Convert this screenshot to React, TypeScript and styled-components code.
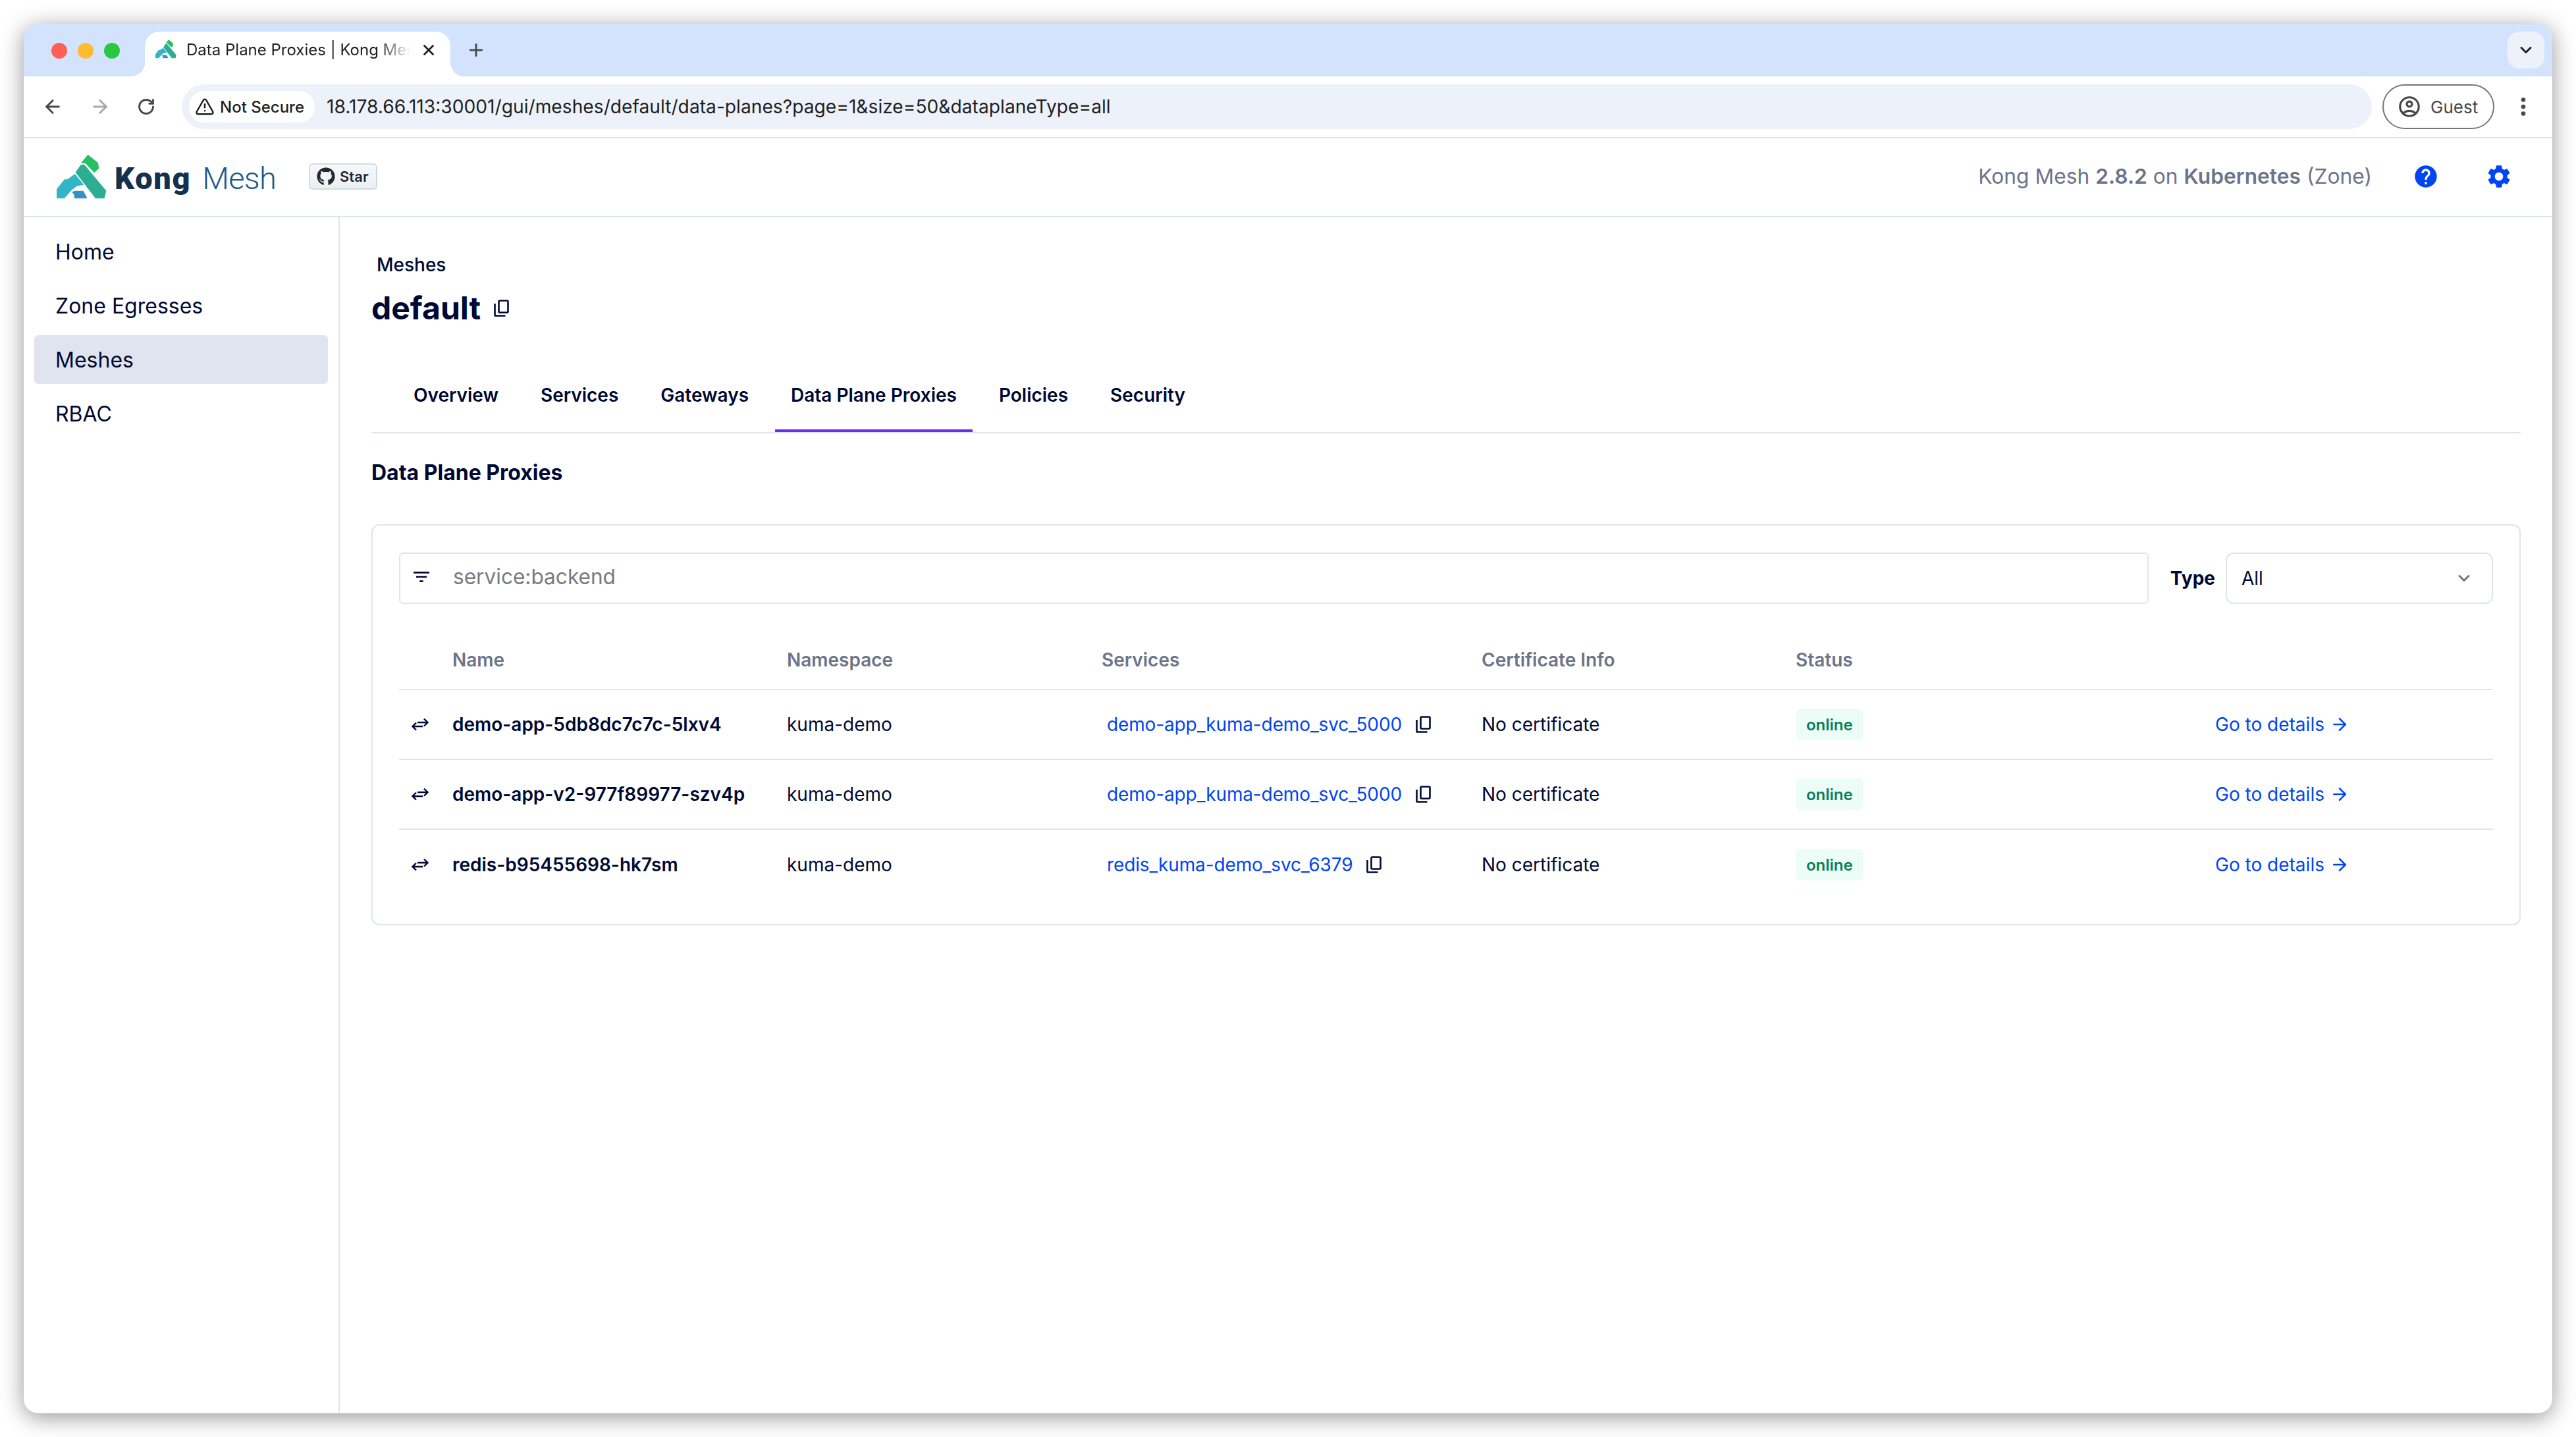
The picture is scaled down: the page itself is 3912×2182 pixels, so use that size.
import React from "react"
import styled, { createGlobalStyle } from "styled-components"
import { ArrowLeft, ArrowRight, ChevronDown, EllipsisVertical, Plus, RotateCw, TriangleAlert, X } from "lucide-react"
import { FaGithub } from "react-icons/fa"
import { MdFilterList, MdHelp, MdOutlineAccountCircle, MdSettings } from "react-icons/md"

const INK = "#000933"
const MUTED = "#6c7489"
const LINK = "#0044f4"
const LINE = "#e0e4ec"

const GlobalStyle = createGlobalStyle`
    html, body {
        margin: 0;
        background: #ffffff;
        font-family: Inter, "Liberation Sans", sans-serif;
        color: ${INK};
    }
    * {
        box-sizing: border-box;
    }
`

const Logo = ({ size }: { size: number }) => (
    <svg width={size} height={(size * 68) / 76} viewBox="0 0 76 68">
        <path fill="#28bf63" d="M37 13.5 47.5 .7 63 13.3l1.3 8.4-7.2 6.6-13.2-14z" />
        <path fill="#2bae93" d="M28.6 27.7 36.8 16h5.3l33.3 39.7-2.9 11.6H59z" />
        <path fill="#31b6c8" d="M0 53.3 11.8 38.3h4.6L27.9 30l13.5 16.7-10 1.6-8.9 6.7-10.7 12.3H0z" />
        <path fill="#3592c4" d="m23.2 57.3 4.7-1.6h12.5l5.3 9.3v2.3H26.8v-5z" />
    </svg>
)

const CopyIcon = () => (
    <CopyGlyph width="23" height="26" viewBox="0 0 23 26" fill="none" stroke={INK} strokeWidth="2.6">
        <rect x="7.5" y="1.5" width="14" height="18" rx="1.5" />
        <path d="M1.5 6v17.2c0 .7.6 1.3 1.3 1.3h14.7" />
    </CopyGlyph>
)

const SwapIcon = () => (
    <svg width="26" height="20" viewBox="0 0 26 20" fill="none" stroke={INK} strokeWidth="2.4">
        <path d="M9 7h15.5M19 1.5 24.5 7 19 12.5" />
        <path d="M17 13H1.8M7 7.5 1.5 13 7 18.5" />
    </svg>
)

const rows = [
    { name: "demo-app-5db8dc7c7c-5lxv4", service: "demo-app_kuma-demo_svc_5000" },
    { name: "demo-app-v2-977f89977-szv4p", service: "demo-app_kuma-demo_svc_5000" },
    { name: "redis-b95455698-hk7sm", service: "redis_kuma-demo_svc_6379" },
]

const tabs = ["Overview", "Services", "Gateways", "Data Plane Proxies", "Policies", "Security"]
const menu = ["Home", "Zone Egresses", "Meshes", "RBAC"]

export default function App() {
    return (
        <Page>
            <GlobalStyle />
            <BrowserWindow>
                <TabStrip>
                    <TrafficLights>
                        <Light $color="#ff5f57" />
                        <Light $color="#febc2e" />
                        <Light $color="#28c840" />
                    </TrafficLights>
                    <BrowserTab>
                        <Logo size={32} />
                        <TabTitle>Data Plane Proxies | Kong Mesh</TabTitle>
                        <X size={26} strokeWidth={2.6} color="#1f1f1f" />
                    </BrowserTab>
                    <NewTab>
                        <Plus size={30} strokeWidth={2.2} color="#444746" />
                    </NewTab>
                    <TabSearch>
                        <ChevronDown size={28} strokeWidth={2.6} color="#1f1f1f" />
                    </TabSearch>
                </TabStrip>
                <Toolbar>
                    <NavIcons>
                        <ArrowLeft size={32} strokeWidth={2.2} color="#474747" />
                        <ArrowRight size={32} strokeWidth={2.2} color="#a8a8a8" />
                        <RotateCw size={28} strokeWidth={2.4} color="#474747" />
                    </NavIcons>
                    <AddressBar>
                        <SecurityChip>
                            <TriangleAlert size={30} strokeWidth={2} color="#1f1f1f" />
                            Not Secure
                        </SecurityChip>
                        <Url>18.178.66.113:30001/gui/meshes/default/data-planes?page=1&amp;size=50&amp;dataplaneType=all</Url>
                    </AddressBar>
                    <GuestButton>
                        <MdOutlineAccountCircle size={38} color="#474747" />
                        Guest
                    </GuestButton>
                    <EllipsisVertical size={36} strokeWidth={2.4} color="#474747" />
                </Toolbar>
                <AppHeader>
                    <Logo size={76} />
                    <Brand>
                        <BrandBold>Kong</BrandBold>
                        <BrandLight>Mesh</BrandLight>
                    </Brand>
                    <StarButton>
                        <FaGithub size={28} color="#24292f" />
                        Star
                    </StarButton>
                    <HeaderSpacer />
                    <Version>
                        Kong Mesh <b>2.8.2</b> on <b>Kubernetes</b> (Zone)
                    </Version>
                    <HeaderIcons>
                        <MdHelp size={40} color={LINK} />
                        <MdSettings size={42} color={LINK} />
                    </HeaderIcons>
                </AppHeader>
                <Body>
                    <Sidebar>
                        {menu.map((item) => (
                            <MenuItem key={item} $active={item === "Meshes"}>
                                {item}
                            </MenuItem>
                        ))}
                    </Sidebar>
                    <Main>
                        <Breadcrumb>Meshes</Breadcrumb>
                        <Title>
                            default
                            <CopyIcon />
                        </Title>
                        <Tabs>
                            {tabs.map((tab) => (
                                <Tab key={tab} $active={tab === "Data Plane Proxies"}>
                                    {tab}
                                </Tab>
                            ))}
                        </Tabs>
                        <SectionTitle>Data Plane Proxies</SectionTitle>
                        <Card>
                            <FilterRow>
                                <FilterField>
                                    <MdFilterList size={32} color={INK} />
                                    <FilterInput placeholder="service:backend" readOnly />
                                </FilterField>
                                <TypeLabel>Type</TypeLabel>
                                <TypeSelect>
                                    All
                                    <ChevronDown size={28} strokeWidth={2.6} color={MUTED} />
                                </TypeSelect>
                            </FilterRow>
                            <TableHead>
                                <span />
                                <span>Name</span>
                                <span>Namespace</span>
                                <span>Services</span>
                                <span>Certificate Info</span>
                                <span>Status</span>
                                <span />
                            </TableHead>
                            {rows.map((row) => (
                                <TableRow key={row.name}>
                                    <SwapIcon />
                                    <NameCell>{row.name}</NameCell>
                                    <span>kuma-demo</span>
                                    <ServiceCell>
                                        <ServiceLink>{row.service}</ServiceLink>
                                        <CopyIcon />
                                    </ServiceCell>
                                    <span>No certificate</span>
                                    <span>
                                        <Badge>online</Badge>
                                    </span>
                                    <DetailsLink>
                                        Go to details
                                        <ArrowRight size={30} strokeWidth={2} />
                                    </DetailsLink>
                                </TableRow>
                            ))}
                        </Card>
                    </Main>
                </Body>
            </BrowserWindow>
        </Page>
    )
}

const Page = styled.div`
    display: flex;
    width: 3912px;
    height: 2182px;
    padding: 36px;
    overflow: hidden;
`

const BrowserWindow = styled.div`
    display: flex;
    flex-direction: column;
    flex: 1;
    background: #ffffff;
    border-radius: 22px;
    overflow: hidden;
    box-shadow: 0 6px 34px rgba(0, 0, 0, 0.42);
`

const TabStrip = styled.div`
    display: flex;
    align-items: flex-end;
    flex-shrink: 0;
    height: 80px;
    padding-right: 12px;
    background: #d3e3fd;
`

const TrafficLights = styled.div`
    display: flex;
    align-self: flex-start;
    gap: 16px;
    width: 184px;
    padding: 29px 0 0 42px;
`

const Light = styled.div<{ $color: string }>`
    width: 24px;
    height: 24px;
    border-radius: 50%;
    background: ${({ $color }) => $color};
`

const BrowserTab = styled.div`
    position: relative;
    display: flex;
    align-items: flex-start;
    width: 464px;
    height: 68px;
    padding: 12px 20px 0 16px;
    gap: 15px;
    background: #ffffff;
    border-radius: 22px 22px 0 0;

    &::before,
    &::after {
        content: "";
        position: absolute;
        bottom: 0;
        width: 22px;
        height: 22px;
    }
    &::before {
        left: -22px;
        background: radial-gradient(circle at 0 0, transparent 22px, #ffffff 22.5px);
    }
    &::after {
        right: -22px;
        background: radial-gradient(circle at 100% 0, transparent 22px, #ffffff 22.5px);
    }

    > svg:last-child {
        margin-top: 3px;
    }
`

const TabTitle = styled.div`
    flex: 1;
    overflow: hidden;
    font-size: 24px;
    line-height: 32px;
    white-space: nowrap;
    color: #1f1f1f;
    -webkit-mask-image: linear-gradient(to right, #000 85%, transparent 100%);
    mask-image: linear-gradient(to right, #000 85%, transparent 100%);
`

const NewTab = styled.div`
    display: flex;
    align-self: flex-start;
    margin: 25px 0 0 24px;
`

const TabSearch = styled.div`
    display: flex;
    align-items: center;
    justify-content: center;
    align-self: flex-start;
    width: 56px;
    height: 56px;
    margin: 12px 0 0 auto;
    border-radius: 18px;
    background: #edf2fa;
`

const Toolbar = styled.div`
    display: flex;
    align-items: center;
    flex-shrink: 0;
    height: 94px;
    padding: 0 26px 0 0;
    background: #ffffff;
    border-bottom: 2px solid #e2e2e2;
    border-radius: 22px 22px 0 0;
`

const NavIcons = styled.div`
    display: flex;
    align-items: center;
    gap: 40px;
    padding-left: 28px;
    width: 240px;
`

const AddressBar = styled.div`
    display: flex;
    align-items: center;
    flex: 1;
    height: 68px;
    padding-left: 11px;
    border-radius: 34px;
    background: #edf2fa;
`

const SecurityChip = styled.div`
    display: flex;
    align-items: center;
    gap: 8px;
    height: 48px;
    padding: 0 16px 0 9px;
    border-radius: 24px;
    background: #ffffff;
    font-size: 24px;
    font-weight: 500;
    color: #1f1f1f;
`

const Url = styled.div`
    margin-left: 18px;
    font-size: 28.2px;
    color: #1f1f1f;
`

const GuestButton = styled.div`
    display: flex;
    align-items: center;
    gap: 13px;
    width: 170px;
    height: 68px;
    margin: 0 26px 0 16px;
    padding-left: 20px;
    border: 2px solid #747775;
    border-radius: 34px;
    font-size: 26px;
    color: #444746;
`

const AppHeader = styled.header`
    display: flex;
    align-items: center;
    flex-shrink: 0;
    height: 120px;
    padding: 0 60px 3px 50px;
    border-bottom: 2px solid ${LINE};
`

const Brand = styled.div`
    display: flex;
    gap: 17px;
    margin: 5px 0 0 12px;
    font-family: Roboto, "Liberation Sans", sans-serif;
    font-size: 47px;
`

const BrandBold = styled.span`
    font-weight: 900;
    letter-spacing: 1.7px;
    color: #14304f;
`

const BrandLight = styled.span`
    font-weight: 300;
    letter-spacing: -0.7px;
    color: #1d5a8a;
`

const StarButton = styled.div`
    display: flex;
    align-items: center;
    gap: 7px;
    width: 104px;
    height: 40px;
    margin-left: 50px;
    padding: 0 10px;
    border: 2px solid #d5dae1;
    border-radius: 6px;
    background: linear-gradient(#f6f8fa, #ebf0f4);
    font-size: 22px;
    font-weight: 600;
    color: #24292f;
`

const HeaderSpacer = styled.div`
    flex: 1;
`

const Version = styled.div`
    font-size: 31.75px;
    color: ${MUTED};

    b {
        font-weight: 600;
    }
`

const HeaderIcons = styled.div`
    display: flex;
    align-items: center;
    gap: 70px;
    margin-left: 62px;
`

const Body = styled.div`
    display: flex;
    flex: 1;
    min-height: 0;
`

const Sidebar = styled.nav`
    display: flex;
    flex-direction: column;
    gap: 8px;
    width: 480px;
    flex-shrink: 0;
    padding: 15px 16px 0 16px;
    border-right: 2px solid ${LINE};
`

const MenuItem = styled.div<{ $active: boolean }>`
    display: flex;
    align-items: center;
    height: 74px;
    padding-left: 32px;
    border-radius: 6px;
    font-size: 32px;
    color: ${INK};
    background: ${({ $active }) => ($active ? "#e0e4ee" : "transparent")};
`

const Main = styled.main`
    flex: 1;
    min-width: 0;
    padding: 54px 48px 0 48px;
`

const Breadcrumb = styled.div`
    margin-left: 8px;
    font-size: 28px;
    line-height: 36px;
    font-weight: 500;
`

const Title = styled.h1`
    display: flex;
    align-items: center;
    gap: 20px;
    margin: 18px 0 0;
    font-size: 48px;
    line-height: 60px;
    font-weight: 700;
`

const CopyGlyph = styled.svg`
    flex-shrink: 0;
`

const Tabs = styled.div`
    display: flex;
    gap: 16px;
    margin-top: 50px;
    padding-left: 40px;
    border-bottom: 2px solid ${LINE};
`

const Tab = styled.div<{ $active: boolean }>`
    display: flex;
    align-items: center;
    height: 108px;
    padding: 0 24px;
    font-size: 28px;
    font-weight: 600;
    border-bottom: 4px solid ${({ $active }) => ($active ? "#6c2df0" : "transparent")};
`

const SectionTitle = styled.h2`
    margin: 40px 0 0;
    font-size: 32px;
    line-height: 40px;
    font-weight: 700;
`

const Card = styled.section`
    margin-top: 58px;
    padding: 41px 40px 37px 40px;
    border: 2px solid ${LINE};
    border-radius: 12px;
`

const FilterRow = styled.div`
    display: flex;
    align-items: center;
    height: 78px;
`

const FilterField = styled.div`
    display: flex;
    align-items: center;
    flex: 1;
    height: 100%;
    padding: 0 0 4px 16px;
    gap: 32px;
    border: 2px solid ${LINE};
    border-radius: 6px;
`

const FilterInput = styled.input`
    flex: 1;
    border: 0;
    outline: 0;
    padding: 0;
    margin-bottom: 2px;
    font: 31.6px Inter, "Liberation Sans", sans-serif;

    &::placeholder {
        color: #777c80;
        opacity: 1;
    }
`

const TypeLabel = styled.div`
    margin: 0 16px 0 33px;
    font-size: 28px;
    font-weight: 700;
`

const TypeSelect = styled.div`
    display: flex;
    align-items: center;
    justify-content: space-between;
    width: 406px;
    height: 100%;
    padding: 0 28px 0 22px;
    border: 2px solid ${LINE};
    border-radius: 12px;
    font-size: 28px;
`

const COLUMNS = "81px 508px 478px 577px 477px 637px 1fr"

const TableHead = styled.div`
    display: grid;
    grid-template-columns: ${COLUMNS};
    align-items: center;
    height: 131px;
    padding-top: 41px;
    border-bottom: 2px solid ${LINE};
    font-size: 28px;
    font-weight: 600;
    color: ${MUTED};
`

const TableRow = styled.div`
    display: grid;
    grid-template-columns: ${COLUMNS};
    align-items: center;
    height: 106px;
    font-size: 28px;
    border-bottom: 2px solid ${LINE};

    > svg:first-child {
        margin-left: 19px;
    }

    &:last-child {
        border-bottom: 0;
    }
`

const NameCell = styled.span`
    font-weight: 600;
`

const ServiceCell = styled.div`
    display: flex;
    align-items: center;
    gap: 21px;
    padding-left: 8px;
`

const ServiceLink = styled.span`
    color: ${LINK};
    letter-spacing: -0.13px;
`

const Badge = styled.span`
    display: inline-flex;
    align-items: center;
    height: 48px;
    padding: 0 16px;
    border-radius: 8px;
    background: #ecfdf7;
    color: #07805a;
    font-size: 24px;
    font-weight: 600;
`

const DetailsLink = styled.span`
    display: inline-flex;
    align-items: center;
    gap: 8px;
    color: ${LINK};
`
